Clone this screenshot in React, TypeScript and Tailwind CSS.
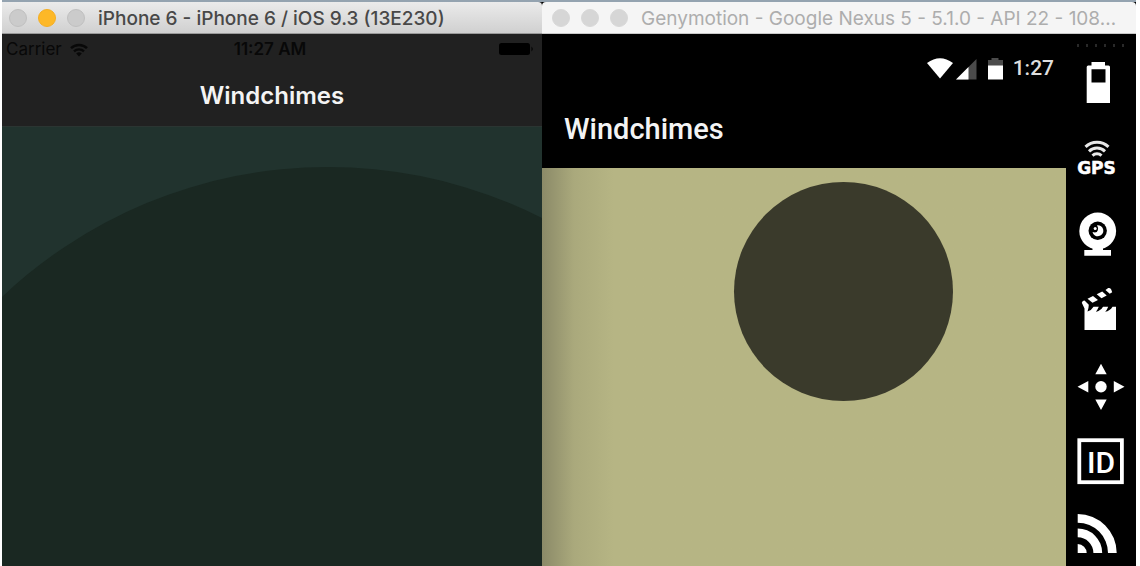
import type { ReactNode } from 'react'

function Dot({ color, label }: { color: string; label: string }) {
  return <button type="button" aria-label={label} className={`size-[18px] shrink-0 rounded-full border ${color}`} />
}

function TitleBar({ title, active }: { title: string; active?: boolean }) {
  const idle = active ? 'border-[#c0c0c0] bg-[#cbcbcb]' : 'border-[#d8d8d8] bg-[#d6d6d6]'
  return (
    <header
      className={`flex h-8 items-center overflow-hidden border-b ${
        active
          ? 'rounded-tr-sm border-[#9a9a9a] bg-linear-to-b from-[#ebebeb] to-[#d0d0d0] pl-[7px] font-medium text-[#484848]'
          : 'rounded-t-sm border-[#c8c8c8] bg-[#f5f5f5] pl-[10px] text-[#adadad]'
      }`}
    >
      <div className="flex gap-[11px]">
        <Dot label="Close" color={idle} />
        <Dot label="Minimise" color={active ? 'border-[#f5ae22] bg-[#fdb827]' : idle} />
        <Dot label="Zoom" color={idle} />
      </div>
      <h2 className="ml-[13px] truncate pt-[3px] font-['Inter',sans-serif] text-[19px] leading-6">{title}</h2>
    </header>
  )
}

function PhoneWindow() {
  return (
    <section className="flex min-w-0 flex-col bg-[#212121]">
      <TitleBar active title="iPhone 6 - iPhone 6 / iOS 9.3 (13E230)" />
      <div className="grid h-8 grid-cols-[1fr_auto_1fr] items-center pr-2 pl-1 font-['Inter',sans-serif] text-[17px] text-[#080808]">
        <div className="flex items-center gap-2">
          <span>Carrier</span>
          <svg viewBox="0 0 18 14" className="h-[14px] w-[18px]" fill="none" stroke="currentColor" strokeWidth="2.4">
            <path d="M1 5.2a11.5 11.5 0 0 1 16 0M4 8.4a7.2 7.2 0 0 1 10 0" />
            <path d="M9 13.5 6.2 10.6a4 4 0 0 1 5.6 0Z" fill="currentColor" stroke="none" />
          </svg>
        </div>
        <span className="font-semibold">11:27 AM</span>
        <svg viewBox="0 0 35 14" className="h-[14px] w-[35px] justify-self-end" fill="#000">
          <rect x="0" y="0" width="31" height="12" rx="2.5" />
          <path d="M32.5 3.500q2.500 2.500 0 5Z" />
        </svg>
      </div>
      <h1 className="flex h-[61px] items-center justify-center border-b border-[#2b3532] text-center font-['Inter',sans-serif] text-[24px] font-semibold text-[#f4f4f4]">
        Windchimes
      </h1>
      <div className="relative flex-1 overflow-hidden bg-[#21332e]">
        <div className="absolute top-[40px] left-[-148px] size-[948px] rounded-full bg-[#1a2822]" />
      </div>
    </section>
  )
}

function Tool({ label, children }: { label: string; children: ReactNode }) {
  return (
    <button type="button" aria-label={label} className="h-[60px] w-12">
      <svg viewBox="0 0 48 60" className="h-[60px] w-12" fill="#fff">
        {children}
      </svg>
    </button>
  )
}

function Toolbar() {
  return (
    <aside className="flex w-[70px] shrink-0 flex-col items-center bg-black pr-px">
      <div className="flex h-4 gap-[7px] pt-[10px]">
        {[0, 1, 2, 3, 4, 5].map((i) => (
          <span key={i} className="h-[3px] w-[2px] bg-[#292929]" />
        ))}
      </div>
      <div className="flex flex-col gap-4">
        <Tool label="Battery">
          <path
            fillRule="evenodd"
            d="M14.500 12h13.500v3.500h3.500q1.500 0 1.500 1.500v36H9.700V17q0-1.500 1.500-1.500h3.300ZM14.500 19.300v13.200h14V19.300Z"
          />
        </Tool>
        <Tool label="GPS">
          <g fill="none" stroke="#e8e8e8" strokeWidth="3">
            <path d="M8.500 20.800a16.500 16.500 0 0 1 23 0M12 25.300a11.500 11.500 0 0 1 16 0M15.500 29.600a6.500 6.500 0 0 1 9 0" />
          </g>
          <text x="19.500" y="48" textAnchor="middle" fontFamily="DejaVu Sans" fontWeight="700" fontSize="17" stroke="#fff" strokeWidth=".5">
            GPS
          </text>
        </Tool>
        <Tool label="Camera">
          <circle cx="20.700" cy="29" r="18.400" />
          <path d="M15.500 45h10.500v3H34v5.800H7.300V48h8.200Z" />
          <circle cx="20.700" cy="28.700" r="9.200" fill="#000" />
          <path d="M20 23.300A5.500 5.500 0 1 1 15.500 30Q20 31.500 20.800 28.200Q21.500 25.500 20 23.300Z" />
          <circle cx="18.200" cy="26.500" r="1.500" />
        </Tool>
        <Tool label="Capture">
          <path d="M7.500 52V30.500L4.800 24.800Q5.500 22.600 7.500 22.500L11.800 26.800Q11.800 29.500 10.500 33.500Q14.500 32.500 16.500 28.800H21.800Q20.500 32 18.800 33.800Q23.500 33 26 28.800H31.200Q30 32 28.200 33.800Q33 33 35.500 28.800H39V52Z" />
          <path d="M10.500 20.800 16 18l5 4-5.500 2.800ZM19.700 16.300l5.500-2.700 4.500 4-5.200 2.700ZM28.500 12l2.700-1.900q2.300-.700 3 1.500l1 2.700-2.500 1.400Z" />
        </Tool>
        <Tool label="Move">
          <circle cx="24" cy="32.700" r="5.700" />
          <path d="m24 9.700 5.700 10.500H18.300ZM24 56l-5.700-10.500h11.400ZM.500 32.700 11.300 27v11.400ZM47.500 32.700 36.800 27v11.400Z" />
        </Tool>
        <Tool label="Identifiers">
          <rect x="2.300" y="10.200" width="42.600" height="42" fill="none" stroke="#fff" strokeWidth="3.800" />
          <text x="24" y="42.500" textAnchor="middle" fontFamily="Roboto" fontWeight="500" fontSize="30">
            ID
          </text>
        </Tool>
        <Tool label="Network">
          <path d="M.700 47V38a9 9 0 0 1 9 9ZM.700 22.500A24.500 24.500 0 0 1 25.200 47H16.400A15.700 15.700 0 0 0 .700 31.300ZM.700 8A39 39 0 0 1 39.700 47H31A30.300 30.300 0 0 0 .700 16.700Z" />
        </Tool>
      </div>
    </aside>
  )
}

function EmulatorWindow() {
  return (
    <section className="flex min-w-0 flex-col bg-black">
      <TitleBar title="Genymotion - Google Nexus 5 - 5.1.0 - API 22 - 108…" />
      <div className="flex flex-1">
        <div className="flex min-w-0 flex-1 flex-col font-['Roboto',sans-serif]">
          <div className="flex h-[70px] items-center justify-end pr-3 text-[#dedede]">
            <svg viewBox="0 0 76 24" className="h-6 w-[76px]">
              <path d="M0 6Q13-3.500 26 6L13 21.500Z" fill="#fff" />
              <path d="M49.500 2v20.500H29Z" fill="#4b4b4b" />
              <path d="M41.500 10v12.500H29Z" fill="#fff" />
              <path d="M61 3h3.500V1h7v2H76v6H61Z" fill="#4b4b4b" />
              <path d="M61 8.500h15v14H61Z" fill="#fff" />
            </svg>
            <span className="ml-[10px] text-[21px] font-medium">1:27</span>
          </div>
          <h1 className="flex h-16 items-start pt-[7px] pl-[22px] text-[29px] leading-9 font-medium text-[#f4f4f4]">
            Windchimes
          </h1>
          <div className="relative flex-1 overflow-hidden bg-[#b6b584] bg-linear-to-r from-[#8b8a68] via-[#aaa97c] via-[32px] to-[#b6b584] to-[72px]">
            <div className="absolute top-[14px] left-[192px] size-[219px] rounded-full bg-[#3a3a2b]" />
          </div>
        </div>
        <Toolbar />
      </div>
    </section>
  )
}

export default function App() {
  return (
    <main className="flex min-h-screen bg-white pr-1 pl-[2px]">
      <div className="grid min-w-0 flex-1 grid-cols-[540fr_594fr] bg-[#94a3b0] pt-[2px]">
        <PhoneWindow />
        <EmulatorWindow />
      </div>
    </main>
  )
}
